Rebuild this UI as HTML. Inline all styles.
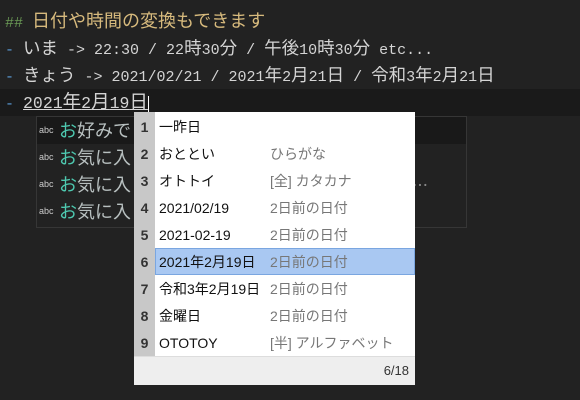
<!DOCTYPE html>
<html><head><meta charset="utf-8"><style>
body{margin:0;width:580px;height:400px;background:#222222;overflow:hidden;position:relative;font-family:"Liberation Mono","Noto Sans CJK JP",monospace;}
.l{position:absolute;left:5px;height:27px;line-height:27px;font-size:15px;color:#d4d4d4;white-space:pre;}
.j{font-family:"Noto Sans CJK JP",sans-serif;font-size:17.5px;}
.d{color:#5a9bd6}
.cur{position:absolute;left:0;top:89px;width:580px;height:27px;background:#1a1a1a;}
.sw{position:absolute;left:36px;top:116px;width:429px;height:110px;border:1px solid #363636;background:#222;}
.sr{position:absolute;left:0;width:429px;height:27px;line-height:27px;font-family:"Noto Sans CJK JP",sans-serif;}
.sr .a{position:absolute;left:2px;font-size:9px;color:#ccc;font-family:"Liberation Sans",sans-serif}
.sr .t{position:absolute;left:22px;font-size:18px;color:#b8c0c0}
.sr .t b{color:#4ec9b0;font-weight:normal}
.ime{position:absolute;left:134px;top:112px;width:281px;height:272px;background:#fff;font-family:"Liberation Sans","Noto Sans CJK JP",sans-serif;}
.nc{position:absolute;left:0;top:0;width:21px;height:244px;background:#c8c8c8;}
.r{position:absolute;left:0;width:281px;height:27px;line-height:27px;font-size:14px;color:#111;}
.r .n{position:absolute;left:0;width:21px;text-align:center;font-weight:bold;color:#333;font-size:14px}
.r .c{position:absolute;left:25px}
.r .m{position:absolute;left:136px;color:#777}
.hl{position:absolute;left:21px;width:258px;height:25px;background:#a9c8f2;border:1px solid #7aa6e0;}
.ft{position:absolute;left:0;top:244px;width:281px;height:28px;background:#eeeeee;border-top:1px solid #ddd;}
</style></head><body>
<div class="cur"></div>
<div class="l" style="top:7px;color:#d7ba7d"><span style="color:#6a9955">##</span> <span class="j" style="font-size:18px">日付や時間の変換もできます</span></div>
<div class="l" style="top:34px"><span class="d">-</span> <span class="j">いま</span> -&gt; 22:30 / 22<span class="j">時</span>30<span class="j">分</span> / <span class="j">午後</span>10<span class="j">時</span>30<span class="j">分</span> etc...</div>
<div class="l" style="top:61px"><span class="d">-</span> <span class="j">きょう</span> -&gt; 2021/02/21 / 2021<span class="j">年</span>2<span class="j">月</span>21<span class="j">日</span> / <span class="j">令和</span>3<span class="j">年</span>2<span class="j">月</span>21<span class="j">日</span></div>
<div class="l" style="top:88px"><span class="d">-</span> <span style="text-decoration:underline;font-size:16.5px">2021<span class="j" style="font-size:18.5px">年</span>2<span class="j" style="font-size:18.5px">月</span>19<span class="j" style="font-size:18.5px">日</span></span><span style="border-left:1px solid #fff"> </span></div>
<div class="sw">
<div class="sr" style="top:0;background:#191919"><span class="a">abc</span><span class="t"><b>お</b>好みで</span></div>
<div class="sr" style="top:27px"><span class="a">abc</span><span class="t"><b>お</b>気に入</span></div>
<div class="sr" style="top:54px"><span class="a">abc</span><span class="t"><b>お</b>気に入</span><span style="position:absolute;left:375px;color:#888">…</span></div>
<div class="sr" style="top:81px"><span class="a">abc</span><span class="t"><b>お</b>気に入</span></div>
</div>
<div class="ime">
<div class="nc"></div>
<div class="hl" style="top:136px"></div>
<div class="r" style="top:2px"><span class="n">1</span><span class="c">一昨日</span></div>
<div class="r" style="top:29px"><span class="n">2</span><span class="c">おととい</span><span class="m">ひらがな</span></div>
<div class="r" style="top:56px"><span class="n">3</span><span class="c">オトトイ</span><span class="m">[全] カタカナ</span></div>
<div class="r" style="top:83px"><span class="n">4</span><span class="c">2021/02/19</span><span class="m">2日前の日付</span></div>
<div class="r" style="top:110px"><span class="n">5</span><span class="c">2021-02-19</span><span class="m">2日前の日付</span></div>
<div class="r" style="top:137px"><span class="n">6</span><span class="c">2021年2月19日</span><span class="m">2日前の日付</span></div>
<div class="r" style="top:164px"><span class="n">7</span><span class="c">令和3年2月19日</span><span class="m">2日前の日付</span></div>
<div class="r" style="top:191px"><span class="n">8</span><span class="c">金曜日</span><span class="m">2日前の日付</span></div>
<div class="r" style="top:218px"><span class="n">9</span><span class="c">OTOTOY</span><span class="m">[半] アルファベット</span></div>
<div class="ft"><span style="position:absolute;right:6px;top:6px;font-size:13px;color:#333">6/18</span></div>
</div>
</body></html>
